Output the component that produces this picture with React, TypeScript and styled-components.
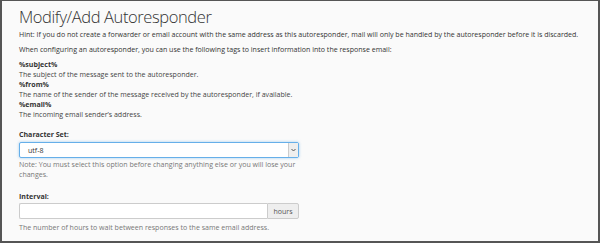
import React from "react";
import styled, { createGlobalStyle } from "styled-components";

const GlobalStyle = createGlobalStyle`
  html, body {
    margin: 0;
    padding: 0;
    background: #fff;
  }
  body {
    font-family: "Open Sans", "Liberation Sans", sans-serif;
  }
`;

const Frame = styled.div`
  box-sizing: border-box;
  width: 600px;
  height: 243px;
  background: #fafafa;
  border-style: solid;
  border-color: #555;
  border-width: 1px 2px 2px 2px;
  padding: 5px 17px 0 17px;
  overflow: hidden;
  color: #333;
`;

const Title = styled.h1`
  margin: 0;
  font-size: 16.5px;
  font-weight: 300;
  letter-spacing: -0.4px;
  line-height: 22px;
  color: #333;
`;

const Para = styled.p<{ $top?: number }>`
  margin: ${(p) => p.$top ?? 0}px 0 0 0;
  font-size: 7.05px;
  line-height: 10px;
  color: #333;
  white-space: nowrap;
`;

const TagList = styled.dl`
  margin: 5px 0 0 0;
  font-size: 7.05px;
  line-height: 10px;
`;

const Tag = styled.dt`
  font-weight: 700;
  color: #333;
`;

const TagDesc = styled.dd`
  margin: 0;
  color: #444;
`;

const Field = styled.div<{ $top: number }>`
  margin-top: ${(p) => p.$top}px;
  width: 280px;
`;

const Label = styled.label<{ $gap: number }>`
  display: block;
  font-size: 7.05px;
  font-weight: 700;
  line-height: 10px;
  color: #333;
  margin-bottom: ${(p) => p.$gap}px;
`;

const SelectBox = styled.div`
  box-sizing: border-box;
  height: 16px;
  display: flex;
  align-items: stretch;
  background: #fff;
  border: 1px solid #66afe9;
  border-radius: 2px;
  box-shadow: 0 0 3px rgba(102, 175, 233, 0.6);
`;

const SelectValue = styled.span`
  flex: 1;
  font-size: 7.05px;
  line-height: 14px;
  padding-left: 8px;
  color: #333;
`;

const SelectArrow = styled.span`
  width: 9px;
  display: flex;
  align-items: center;
  justify-content: center;
  background: #eee;
  border-left: 1px solid #ccc;
`;

const Help = styled.p<{ $top: number }>`
  margin: ${(p) => p.$top}px 0 0 0;
  font-size: 7.05px;
  line-height: 10px;
  color: #777;
`;

const InputGroup = styled.div`
  display: flex;
  height: 16px;
`;

const TextInput = styled.div`
  box-sizing: border-box;
  flex: 1;
  background: #fff;
  border: 1px solid #ccc;
  border-right: none;
  border-radius: 2px 0 0 2px;
`;

const Addon = styled.span`
  box-sizing: border-box;
  width: 32px;
  background: #eee;
  border: 1px solid #ccc;
  border-radius: 0 2px 2px 0;
  font-size: 7.05px;
  line-height: 14px;
  text-align: center;
  color: #555;
`;

const App = () => {
  return (
    <>
      <GlobalStyle />
      <Frame>
        <Title>Modify/Add Autoresponder</Title>
        <Para $top={1}>
          Hint: If you do not create a forwarder or email account with the same
          address as this autoresponder, mail will only be handled by the
          autoresponder before it is discarded.
        </Para>
        <Para $top={5}>
          When configuring an autoresponder, you can use the following tags to
          insert information into the response email:
        </Para>
        <TagList>
          <Tag>%subject%</Tag>
          <TagDesc>The subject of the message sent to the autoresponder.</TagDesc>
          <Tag>%from%</Tag>
          <TagDesc>
            The name of the sender of the message received by the
            autoresponder, if available.
          </TagDesc>
          <Tag>%email%</Tag>
          <TagDesc>The incoming email sender’s address.</TagDesc>
        </TagList>
        <Field $top={10}>
          <Label $gap={3}>Character Set:</Label>
          <SelectBox>
            <SelectValue>utf-8</SelectValue>
            <SelectArrow>
              <svg width="5" height="4" viewBox="0 0 5 4">
                <path d="M0.5 1 L2.5 3 L4.5 1" fill="none" stroke="#555" strokeWidth="1" />
              </svg>
            </SelectArrow>
          </SelectBox>
          <Help $top={1}>
            Note: You must select this option before changing anything else or
            you will lose your changes.
          </Help>
        </Field>
        <Field $top={12}>
          <Label $gap={2}>Interval:</Label>
          <InputGroup>
            <TextInput />
            <Addon>hours</Addon>
          </InputGroup>
          <Help $top={3}>
            The number of hours to wait between responses to the same email
            address.
          </Help>
        </Field>
      </Frame>
    </>
  );
};

export default App;
